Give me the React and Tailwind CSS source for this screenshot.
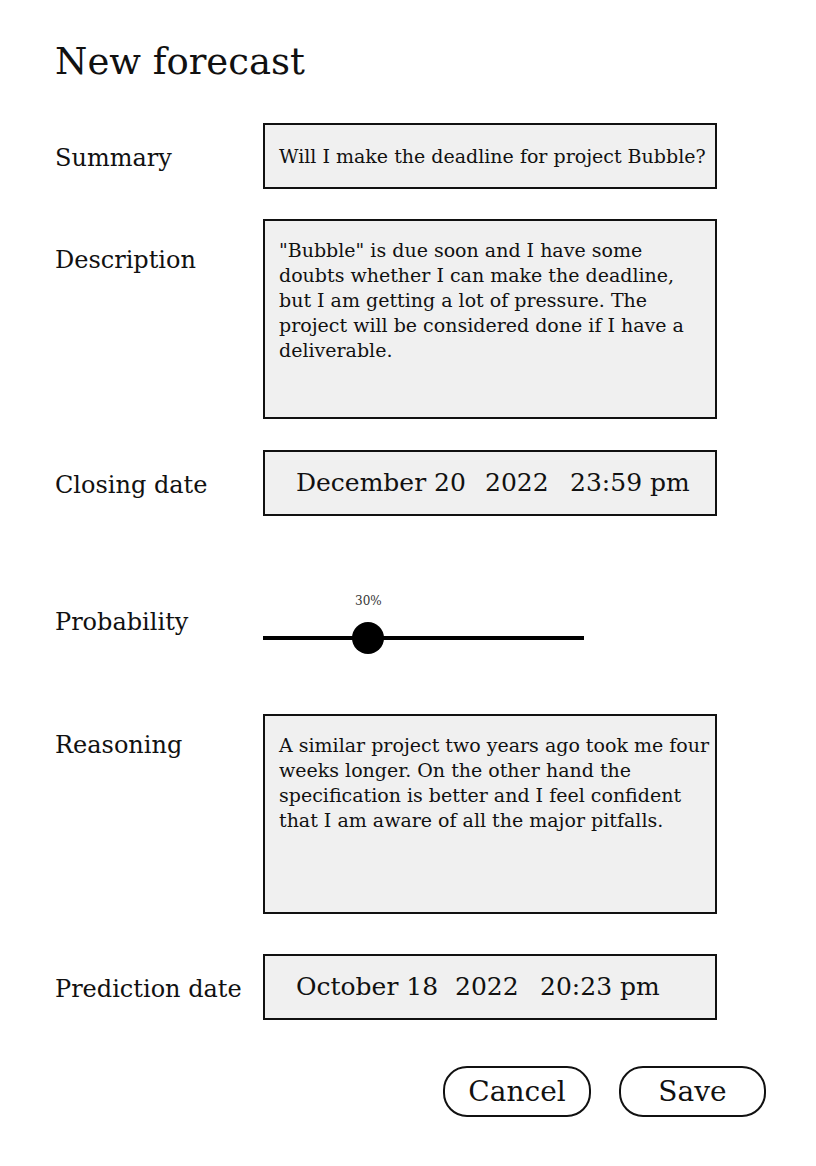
const serif = { fontFamily: '"DejaVu Serif", "Liberation Serif", serif' };

function Row({ label, labelPad, children, className = "" }) {
  return (
    <div className={`flex ${className}`}>
      <div className={`w-[208px] shrink-0 text-[24px] leading-[32px] ${labelPad}`}>{label}</div>
      {children}
    </div>
  );
}

function Box({ className = "", children }) {
  return (
    <div className={`w-[454px] border-2 border-[#111] bg-[#f0f0f0] ${className}`}>{children}</div>
  );
}

// date, year and time sit in fixed columns like the mockup
function DateBox({ day, year, time, dayWidth }) {
  return (
    <Box className="flex h-[66px] items-center whitespace-nowrap pl-[31px] text-[25px]">
      <span className={dayWidth}>{day}</span>
      <span className="w-[85px]">{year}</span>
      <span>{time}</span>
    </Box>
  );
}

export default function App() {
  return (
    <div style={serif} className="min-h-[1166px] w-[816px] bg-white pl-[55px] pr-[50px] text-[#111]">
      <h1 className="pt-[43px] text-[37px] leading-[38px]">New forecast</h1>

      <Row label="Summary" labelPad="pt-[19px]" className="mt-[42px]">
        <Box className="flex h-[66px] items-center pl-[14px] text-[19px]">
          Will I make the deadline for project Bubble?
        </Box>
      </Row>

      <Row label="Description" labelPad="pt-[25px]" className="mt-[30px]">
        <Box className="h-[200px] pl-[14px] pr-[4px] pt-[17px] text-[19px] leading-[25px]">
          "Bubble" is due soon and I have some doubts whether I can make the deadline, but I am
          getting a lot of pressure. The project will be considered done if I have a deliverable.
        </Box>
      </Row>

      <Row label="Closing date" labelPad="pt-[19px]" className="mt-[31px]">
        <DateBox day="December 20" year="2022" time="23:59 pm" dayWidth="w-[189px]" />
      </Row>

      <Row label="Probability" labelPad="pt-[16px]" className="mt-[74px]">
        <div className="relative h-[70px] w-[321px]">
          <div className="absolute left-[92px] top-[2px] w-[26px] text-center text-[12px] text-[#333]">30%</div>
          <div className="absolute left-0 right-0 top-[46px] h-[4px] bg-black" />
          <div className="absolute left-[89px] top-[32px] h-[32px] w-[32px] rounded-full bg-black" />
        </div>
      </Row>

      <Row label="Reasoning" labelPad="pt-[15px]" className="mt-[54px]">
        <Box className="h-[200px] pl-[14px] pr-[2px] pt-[17px] text-[19px] leading-[25px]">
          A similar project two years ago took me four weeks longer. On the other hand the
          specification is better and I feel confident that I am aware of all the major pitfalls.
        </Box>
      </Row>

      <Row label="Prediction date" labelPad="pt-[19px]" className="mt-[40px]">
        <DateBox day="October 18" year="2022" time="20:23 pm" dayWidth="w-[159px]" />
      </Row>

      <div className="mt-[46px] flex justify-end gap-[28px]">
        <button className="h-[51px] w-[148px] rounded-[24px] border-2 border-[#111] text-[28px]">
          Cancel
        </button>
        <button className="h-[51px] w-[147px] rounded-[24px] border-2 border-[#111] text-[28px]">
          Save
        </button>
      </div>
    </div>
  );
}
